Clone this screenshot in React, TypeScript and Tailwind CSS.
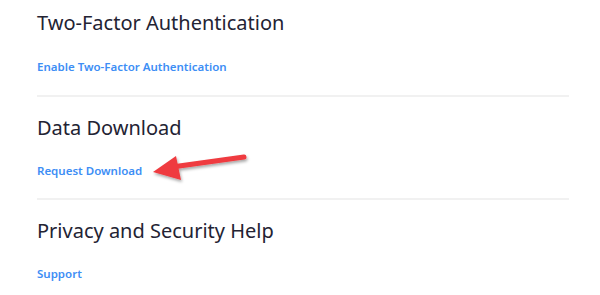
import React from 'react';

const SECTIONS = [
  { title: 'Two-Factor Authentication', link: 'Enable Two-Factor Authentication' },
  { title: 'Data Download', link: 'Request Download' },
  { title: 'Privacy and Security Help', link: 'Support' },
];

const Arrow: React.FC = () => (
  <svg className="absolute left-[150px] top-[148px]" width="105" height="38" viewBox="0 0 105 38">
    <defs>
      <filter id="sh" x="-20%" y="-50%" width="140%" height="200%">
        <feDropShadow dx="1" dy="2" stdDeviation="1.5" floodColor="#000" floodOpacity="0.35" />
      </filter>
    </defs>
    <g filter="url(#sh)">
      <line x1="94" y1="9" x2="22" y2="19" stroke="#ef3b3f" strokeWidth="5" strokeLinecap="round" />
      <polygon points="3,24 26,8 31,32" fill="#ef3b3f" />
    </g>
  </svg>
);

const App: React.FC = () => {
  return (
    <div className="relative w-[600px] h-[295px] bg-white overflow-hidden font-['Noto_Sans',sans-serif]">
      <div className="pl-[37px] w-[569px]">
        {SECTIONS.map((s, i) => (
          <section
            key={s.title}
            className={`${i === 0 ? 'pt-[9px] pb-[20px]' : 'pt-[17px] pb-[19px]'} ${i < SECTIONS.length - 1 ? 'border-b-2 border-[#f1f1f1]' : ''}`}
          >
            <h2 className="text-[20px] leading-[28px] text-[#232333] font-normal">{s.title}</h2>
            <a
              href="#"
              className={`block ${i === 0 ? 'mt-[22px]' : 'mt-[21px]'} text-[11.5px] leading-[16px] font-semibold text-[#3d8ef5]`}
            >
              {s.link}
            </a>
          </section>
        ))}
      </div>
      <Arrow />
    </div>
  );
};

export default App;
